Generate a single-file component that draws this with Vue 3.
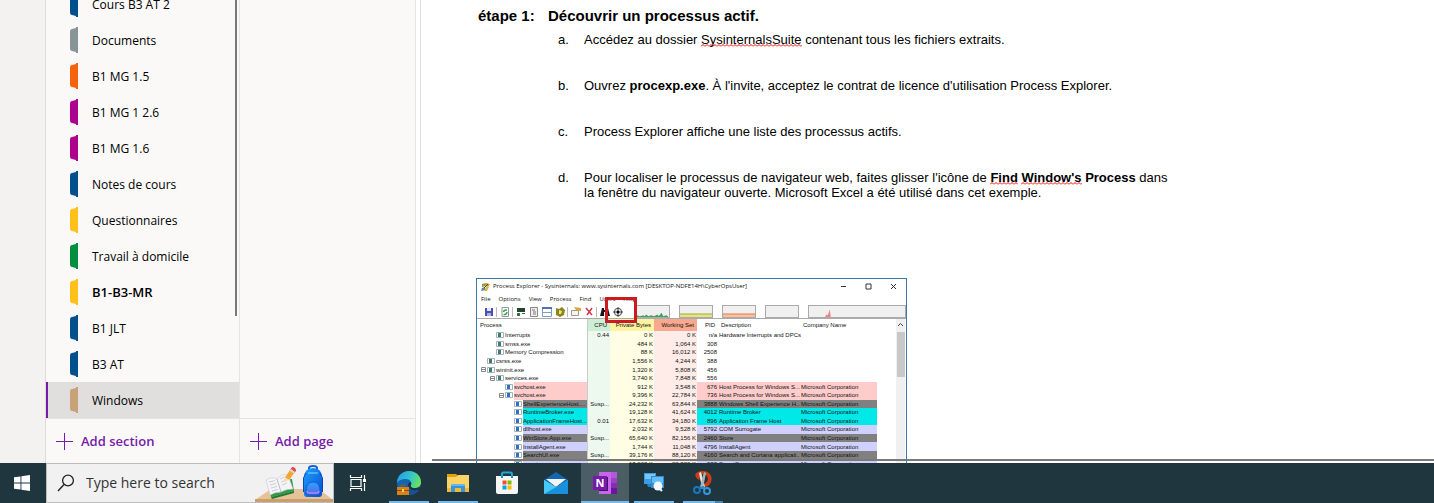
<script setup>
const sections = [
  { name: 'Cours B3 AT 2', tint: 'blue' },
  { name: 'Documents', tint: 'grey' },
  { name: 'B1 MG 1.5', tint: 'orange' },
  { name: 'B1 MG 1 2.6', tint: 'magenta' },
  { name: 'B1 MG 1.6', tint: 'magenta' },
  { name: 'Notes de cours', tint: 'blue' },
  { name: 'Questionnaires', tint: 'yellow' },
  { name: 'Travail à domicile', tint: 'green' },
  { name: 'B1-B3-MR', tint: 'yellow', bold: true },
  { name: 'B1 JLT', tint: 'blue' },
  { name: 'B3 AT', tint: 'blue' },
  { name: 'Windows', tint: 'tan', active: true },
]

const menus = ['File', 'Options', 'View', 'Process', 'Find', 'Users', 'Help']

const ms = 'Microsoft Corporation'
const rows = [
  { n: 'Interrupts', l: 2, cpu: '0.44', pb: '0 K', ws: '0 K', pid: 'n/a', d: 'Hardware Interrupts and DPCs' },
  { n: 'smss.exe', l: 2, pb: '484 K', ws: '1,064 K', pid: '308' },
  { n: 'Memory Compression', l: 2, pb: '88 K', ws: '16,012 K', pid: '2508' },
  { n: 'csrss.exe', l: 1, pb: '1,556 K', ws: '4,244 K', pid: '388' },
  { n: 'wininit.exe', l: 1, open: true, pb: '1,320 K', ws: '5,808 K', pid: '456' },
  { n: 'services.exe', l: 2, open: true, pb: '3,740 K', ws: '7,848 K', pid: '556' },
  { n: 'svchost.exe', l: 3, c: 'pink', pb: '912 K', ws: '3,548 K', pid: '676', d: 'Host Process for Windows S...', co: ms },
  { n: 'svchost.exe', l: 3, open: true, c: 'pink', pb: '9,396 K', ws: '22,784 K', pid: '736', d: 'Host Process for Windows S...', co: ms },
  { n: 'ShellExperienceHost....', l: 4, c: 'dark', cpu: 'Susp...', pb: '24,232 K', ws: '63,844 K', pid: '3888', d: 'Windows Shell Experience H...', co: ms },
  { n: 'RuntimeBroker.exe', l: 4, c: 'cyan', pb: '19,128 K', ws: '41,624 K', pid: '4012', d: 'Runtime Broker', co: ms },
  { n: 'ApplicationFrameHost...', l: 4, c: 'cyan', cpu: '0.01', pb: '17,632 K', ws: '34,180 K', pid: '896', d: 'Application Frame Host', co: ms },
  { n: 'dllhost.exe', l: 4, c: 'lilac', pb: '2,032 K', ws: '9,528 K', pid: '5792', d: 'COM Surrogate', co: ms },
  { n: 'WinStore.App.exe', l: 4, c: 'dark', cpu: 'Susp...', pb: '65,640 K', ws: '82,156 K', pid: '2460', d: 'Store', co: ms },
  { n: 'InstallAgent.exe', l: 4, c: 'lilac', pb: '1,744 K', ws: '11,048 K', pid: '4796', d: 'InstallAgent', co: ms },
  { n: 'SearchUI.exe', l: 4, c: 'dark', cpu: 'Susp...', pb: '39,176 K', ws: '88,120 K', pid: '4160', d: 'Search and Cortana applicati...', co: ms },
  { n: 'smartscreen.exe', l: 4, c: 'lilac', pb: '13,208 K', ws: '22,820 K', pid: '988', d: 'SmartScreen', co: ms },
]
</script>

<template>
  <div class="screen">
    <div class="workspace">
      <div class="rail"></div>

      <nav class="sections" aria-label="Sections">
        <ul class="section-list">
          <li v-for="s in sections" :key="s.name">
            <button class="section" :class="{ active: s.active, bold: s.bold }">
              <svg class="tab" :class="s.tint" width="8" height="26" viewBox="0 0 8 26" aria-hidden="true">
                <path d="M8 0H6V1L2 2Q0 2 0 5V21Q0 24 2 24L6 25V26H8Z" />
              </svg>
              <span>{{ s.name }}</span>
            </button>
          </li>
        </ul>
        <div class="scroll-thumb"></div>
        <button class="add">
          <svg width="17" height="17" viewBox="0 0 17 17" aria-hidden="true"><path d="M0 8.5H17M8.5 0V17" /></svg>
          Add section
        </button>
      </nav>

      <div class="pages">
        <div class="page-list"></div>
        <button class="add">
          <svg width="17" height="17" viewBox="0 0 17 17" aria-hidden="true"><path d="M0 8.5H17M8.5 0V17" /></svg>
          Add page
        </button>
      </div>

      <main class="note">
        <h2><span class="step">étape 1:</span>Découvrir un processus actif.</h2>
        <ol class="steps">
          <li>Accédez au dossier <span class="typo">SysinternalsSuite</span> contenant tous les fichiers extraits.</li>
          <li>Ouvrez <b>procexp.exe</b>. À l'invite, acceptez le contrat de licence d'utilisation Process Explorer.</li>
          <li>Process Explorer affiche une liste des processus actifs.</li>
          <li>Pour localiser le processus de navigateur web, faites glisser l'icône de <b><span class="typo">Find</span> <span class="typo">Window's</span> Process</b> dans<br>la fenêtre du navigateur ouverte. Microsoft Excel a été utilisé dans cet exemple.</li>
        </ol>

        <section class="procexp" aria-label="Process Explorer">
          <header class="titlebar">
            <svg width="10" height="10" viewBox="0 0 10 10" aria-hidden="true">
              <path d="M1 2L5 1 4.500 4 1 5Z" fill="#8a9a4a" /><path d="M5 1L9 2 7 5 4 4Z" fill="#c9a227" />
              <path d="M1 6L4 5 4 8 0 9Z" fill="#5f7fa8" /><path d="M5 5L8 5 6 9 3 9Z" fill="#d9b73c" />
              <path d="M3 6L7 2" stroke="#444" />
            </svg>
            <span class="title">Process Explorer - Sysinternals: www.sysinternals.com [DESKTOP-NDFE14H\CyberOpsUser]</span>
            <button aria-label="Minimize"><svg width="7" height="7" viewBox="0 0 7 7"><path d="M1 3.500H6" /></svg></button>
            <button aria-label="Maximize"><svg width="7" height="7" viewBox="0 0 7 7"><path d="M1 1H6V6H1Z" /></svg></button>
            <button aria-label="Close"><svg width="7" height="7" viewBox="0 0 7 7"><path d="M1 1L6 6M6 1L1 6" /></svg></button>
          </header>
          <div class="menubar">
            <button v-for="m in menus" :key="m">{{ m }}</button>
          </div>
          <div class="toolbar">
            <button aria-label="Save"><svg viewBox="0 0 12 12"><path d="M2 2H10V10H2Z" fill="#4a4fb0" /><path d="M4 2H8V5H4Z" fill="#e6e9fb" /><path d="M4 7H8V10H4Z" fill="#a9aee0" /></svg></button>
            <i></i>
            <button aria-label="Refresh"><svg viewBox="0 0 12 12"><path d="M3 1.500H9.500V10.500H3Z" fill="#fff" stroke="#8a9aa8" /><path d="M4.500 6Q5 3.500 8 4M8 6Q7.500 9 4.500 8.500" fill="none" stroke="#3b9a48" stroke-width="1.500" /></svg></button>
            <i></i>
            <button aria-label="System information"><svg viewBox="0 0 12 12"><path d="M2 2H10V6H2Z" fill="#24452b" /><path d="M2 7H5V10H2ZM7 7H10V8H7Z" fill="#3e6a48" /></svg></button>
            <button aria-label="Process tree"><svg viewBox="0 0 12 12"><path d="M2.500 1.500H9.500V10.500H2.500Z" fill="#eee" stroke="#888" /><path d="M4 4H7M5 6H8M5 8H8" stroke="#777" /></svg></button>
            <button aria-label="Lower pane"><svg viewBox="0 0 12 12"><path d="M1.500 1.500H10.500V10.500H1.500Z" fill="#fff" stroke="#7f9cc8" /><path d="M1 2H11" stroke="#4a72b5" stroke-width="2" /><path d="M1 6.500H11" stroke="#7f9cc8" /></svg></button>
            <button aria-label="Handles"><svg viewBox="0 0 12 12"><path d="M2 2L5 3 8 1 11 4 10 9 6 11 2 9Z" fill="#8b8520" /><path d="M5 4L8 5 7 8 5 8Z" fill="#ece66a" /></svg></button>
            <i></i>
            <button aria-label="Properties"><svg viewBox="0 0 12 12"><path d="M1.500 4.500H8.500V9.500H1.500Z" fill="#f8f4e6" stroke="#999" /><path d="M4 1L11 2V5L6 4Z" fill="#d9a63a" /></svg></button>
            <button aria-label="Kill process"><svg viewBox="0 0 12 12"><path d="M3 2L9 9M9 2L4 9" stroke="#d2364f" stroke-width="1.500" /></svg></button>
            <i></i>
            <button aria-label="Find"><svg viewBox="0 0 12 12"><path d="M3 2H5V4H7V2H9L11 10H7V6H5V10H1Z" fill="#161616" /></svg></button>
            <button aria-label="Find window's process"><svg viewBox="0 0 12 12"><circle cx="6" cy="6" r="3.700" fill="#fff" stroke="#444" /><path d="M6 1V11M1 6H11" stroke="#444" /><circle cx="6" cy="6" r="1.500" /></svg></button>
            <div class="graphs">
              <svg class="graph" viewBox="0 0 34 13" preserveAspectRatio="none"><path d="M0 13V11L3 12 7 11 8 12 10 10 12 12 15 11 18 12 22 10 23 12 26 8 28 12 31 11 33 12V13Z" fill="#3da35d" /></svg>
              <svg class="graph" viewBox="0 0 34 13" preserveAspectRatio="none"><path d="M0 9H34V13H0Z" fill="#e3e38c" /><path d="M0 9.500H34" stroke="#a8a820" /></svg>
              <svg class="graph" viewBox="0 0 34 13" preserveAspectRatio="none"><path d="M0 9H34V13H0Z" fill="#ffc0a0" /><path d="M0 9.500H34" stroke="#e8743c" /></svg>
              <svg class="graph" viewBox="0 0 34 13"></svg>
              <svg class="graph wide" viewBox="0 0 97 13" preserveAspectRatio="none"><path d="M16 13L18 10 19 11 21 4 22 13Z" fill="#f47f86" /></svg>
            </div>
          </div>
          <div class="highlight"></div>
          <div class="list">
            <table>
              <thead>
                <tr>
                  <th>Process</th><th class="cpu">CPU</th><th class="pb">Private Bytes</th><th class="ws">Working Set</th>
                  <th class="num">PID</th><th>Description</th><th>Company Name</th>
                </tr>
              </thead>
              <tbody>
                <tr v-for="(r, i) in rows" :key="i" :class="r.c">
                  <td class="proc" :class="'level' + r.l">
                    <svg class="twist" width="5" height="5" viewBox="0 0 5 5" aria-hidden="true"><path v-if="r.open" d="M.5.5H4.500V4.500H.5ZM1 2.500H4" /></svg>
                    <svg class="app" width="8" height="6" viewBox="0 0 8 6" aria-hidden="true"><path d="M.5.5H7.500V5.500H.5Z" fill="#fff" stroke="#a3b1bd" /><path d="M2 1H5V5H2Z" :fill="r.l > 2 ? '#2f6fc4' : '#3f7d72'" /></svg>
                    <span>{{ r.n }}</span>
                  </td>
                  <td class="cpu">{{ r.cpu }}</td>
                  <td class="pb">{{ r.pb }}</td>
                  <td class="ws">{{ r.ws }}</td>
                  <td class="num fill">{{ r.pid }}</td>
                  <td class="fill">{{ r.d }}</td>
                  <td class="fill">{{ r.co }}</td>
                </tr>
              </tbody>
            </table>
            <div class="vscroll">
              <svg width="7" height="5" viewBox="0 0 7 5" aria-hidden="true"><path d="M1 4L3.500 1.500 6 4" fill="none" stroke="#444" /></svg>
              <div></div>
            </div>
          </div>
        </section>
        <div class="hscroll"></div>
      </main>
    </div>

    <footer class="taskbar">
      <button class="start" aria-label="Start">
        <svg width="16" height="16" viewBox="0 0 16 16"><path d="M0 2.300L6.500 1.400V7.500H0ZM7.400 1.200L16 0V7.500H7.400ZM0 8.400H6.500V14.600L0 13.700ZM7.400 8.400H16V16L7.400 14.800Z" fill="#fff" /></svg>
      </button>
      <label class="search">
        <svg width="18" height="18" viewBox="0 0 18 18" aria-hidden="true"><circle cx="11" cy="6.500" r="5.400" fill="none" stroke="#222" stroke-width="1.300" /><path d="M7 10.500L1 17" stroke="#222" stroke-width="1.400" /></svg>
        <input type="text" placeholder="Type here to search" aria-label="Type here to search">
        <svg class="desk" width="78" height="38" viewBox="0 0 78 38" aria-hidden="true">
          <defs>
            <linearGradient id="bag" x1="0" y1="0" x2="1" y2="1"><stop offset="0" stop-color="#1ba0ff" /><stop offset="1" stop-color="#0b4fd0" /></linearGradient>
            <linearGradient id="pocket" x1="0" y1="0" x2="0" y2="1"><stop offset="0" stop-color="#2aa5ff" /><stop offset="1" stop-color="#5b63e8" /></linearGradient>
          </defs>
          <path d="M16 25H64L78 36H0Z" fill="#e6c298" /><path d="M0 35H78V38H0Z" fill="#c9a06c" />
          <path d="M12 18L16 33 39 27 37 15Z" fill="#2f9a47" /><path d="M16 33L39 27V29L17 35Z" fill="#1f7a35" />
          <path d="M11 16Q17 12 22 15 27 9 33 11L38 25Q31 25 26 28 20 28 15 31Z" fill="#f4f4f6" stroke="#c9c9d2" stroke-width=".6" />
          <path d="M22 15L26 28" stroke="#bbb" /><path d="M14 18L20 16.500M15 21L21 19.500M16 24L22 22.500M17 27L23 25.500M25 15L31 12.500M26 18L32 16M27 21L32 19" stroke="#c2c3d2" stroke-width=".8" />
          <path d="M29 17L31 12 35 6 39 9 35 15Z" fill="#f8a52a" /><path d="M29 18L30 13 34 16Z" fill="#f7dfbd" /><path d="M35 6L37 3Q41 3 41 7L38.500 9.500Z" fill="#e9483e" /><path d="M34.500 6.500L36 5 40 8 38.500 9.500Z" fill="#d8d8e2" />
          <path d="M54 6V4Q54 2 58 2T62 4V6" fill="none" stroke="#1263d6" stroke-width="2" />
          <path d="M49 14Q49 4 58 4T67 14V30Q67 33 64 33H52Q49 33 49 30Z" fill="url(#bag)" />
          <path d="M51 9L48.500 14V28M65 9L67.500 14V28" fill="none" stroke="#0d47b5" />
          <path d="M53 9H63" stroke="#8cd5ff" /><path d="M51 27Q51 18 58 18T65 27V29Q65 31 63 31H53Q51 31 51 29Z" fill="url(#pocket)" stroke="#104bc0" stroke-width=".7" />
          <path d="M52 27Q52 29 54 29H62Q64 29 64 27" fill="none" stroke="#c99cff" />
        </svg>
      </label>
      <button class="task view" aria-label="Task View">
        <svg width="18" height="18" viewBox="0 0 18 18"><path d="M1.500 1V3.500H12.500V1M1.500 17V14.500H12.500V17M2 5.500H12V12.500H2ZM15.500 1V5M15.500 9V17" fill="none" stroke="#fff" stroke-width="1.200" /><path d="M14 5H17V8H14Z" fill="#fff" /></svg>
      </button>
      <button class="task open" aria-label="Microsoft Edge">
        <svg width="26" height="26" viewBox="0 0 26 26">
          <defs><linearGradient id="edge" x1="0" y1=".3" x2="1" y2=".6"><stop offset="0" stop-color="#259de5" /><stop offset=".5" stop-color="#31c4cf" /><stop offset="1" stop-color="#6be553" /></linearGradient></defs>
          <circle cx="13" cy="13" r="12" fill="#1267b5" />
          <path d="M1 13C1 6 6 1 13 1S25 6 25 12C25 16 22 18 19 18 16 18 14 17 15 15 16 12 14 9 10 9 5 9 2 11 1 13Z" fill="url(#edge)" />
          <path d="M15 12C16 14 14 15 15 17 17 19 21 18 24 17L25 18 23 20C18 22 12 19 12 15Q12 12 15 12Z" fill="#20363f" />
          <path d="M11 12C9 17 13 22 23 20 21 23 18 25 14 25L9 20Z" fill="#184f97" />
          <path d="M1 17H13V25H1Z" fill="#d78316" /><path d="M1 20H13V21H1Z" fill="#8d4c06" /><path d="M5 17V15H9V17" fill="none" stroke="#9d5a0c" /><path d="M6 19H8V22H6Z" fill="#ffd34d" />
        </svg>
      </button>
      <button class="task open" aria-label="File Explorer">
        <svg width="24" height="22" viewBox="0 0 24 22"><path d="M1 2H10L12 4V7H1Z" fill="#e3a30c" /><path d="M1 5H10L12 3H23V20H1Z" fill="#fbd465" /><path d="M1 16H23V20H1Z" fill="#f3b73a" /><path d="M5 20V12H19V20H15V16H9V20Z" fill="#3a94dc" /><path d="M5 12H19V14H5Z" fill="#69b7ef" /></svg>
      </button>
      <button class="task" aria-label="Microsoft Store">
        <svg width="24" height="24" viewBox="0 0 24 24"><path d="M7 7V3Q7 1.500 8.500 1.500H15.500Q17 1.500 17 3V7" fill="none" stroke="#20a7d8" stroke-width="2" /><path d="M1 5H23V21Q23 23 21 23H3Q1 23 1 21Z" fill="#f5f5f5" /><path d="M7 5V7M17 5V7" stroke="#168fc0" stroke-width="2" /><path d="M7.500 9.500H11.500V13.500H7.500Z" fill="#f25022" /><path d="M12.500 9.500H16.500V13.500H12.500Z" fill="#7fba00" /><path d="M7.500 14.500H11.500V18.500H7.500Z" fill="#00a4ef" /><path d="M12.500 14.500H16.500V18.500H12.500Z" fill="#ffb900" /></svg>
      </button>
      <button class="task" aria-label="Mail">
        <svg width="24" height="24" viewBox="0 0 24 24"><path d="M0 9L12 1 24 9V13H0Z" fill="#1267b4" /><path d="M2 8H22L12 16Z" fill="#f4f4f4" /><path d="M0 9L12 16 24 9V23H0Z" fill="#2fb3ee" /><path d="M0 23L24 9V23Z" fill="#1990dc" /><path d="M0 9L12 16 0 23Z" fill="#47c8f6" /></svg>
      </button>
      <button class="task open current" aria-label="OneNote">
        <svg width="24" height="24" viewBox="0 0 24 24"><path d="M6 1H24V23H6Z" fill="#ca64ea" /><path d="M18 1H24V7H18Z" fill="#b159d8" /><path d="M18 7H24V12H18Z" fill="#9a42c6" /><path d="M18 12H24V17H18Z" fill="#832db0" /><path d="M18 17H24V23H18Z" fill="#681899" /><path d="M6 6H15V20H6Z" fill="#3e1467" /><path d="M0 5H14V19H0Z" fill="#7719aa" /><text x="7" y="16" text-anchor="middle" fill="#fff" font-family="Open Sans, sans-serif" font-size="11" font-weight="700">N</text></svg>
      </button>
      <button class="task open" aria-label="Remote session">
        <svg width="24" height="24" viewBox="0 0 24 24"><path d="M2 2H14V13H2Z" fill="#3b9ee2" /><path d="M3 3H13V8H3Z" fill="#78c6f6" /><path d="M9 5H22V17H9Z" fill="#2b8bd6" /><path d="M10 6H21V12H10Z" fill="#65bdf3" /><path d="M5 13H9V16H6Z" fill="#287fc0" /><circle cx="16" cy="15" r="4.500" fill="#f2f8fc" /><path d="M18 18L20 20" stroke="#f2f8fc" stroke-width="2" /></svg>
      </button>
      <button class="task open stacked" aria-label="Snipping Tool">
        <svg width="24" height="26" viewBox="0 0 24 26"><path d="M8 10C0 4 7 1 12 1 19 1 22 7 20 12 19 15 16 17 13 17L12 14C17 13 18 9 16 6 14 3 8 4 9 8Z" fill="#cf3c16" /><path d="M8 3L10 2 14 17 11 18Z" fill="#e3e7ea" /><path d="M15 3L13 2 9 17 12 18Z" fill="#a9b2b8" /><path d="M11 16L13 16 15 19H8Z" fill="#2f8ccd" /><circle cx="6" cy="20" r="3" fill="none" stroke="#1976c2" stroke-width="2" /><circle cx="16" cy="21" r="3" fill="none" stroke="#3398dc" stroke-width="2" /></svg>
      </button>
    </footer>
  </div>
</template>

<style>
html, body { margin: 0; background: #fff; }
</style>

<style scoped>
* { box-sizing: border-box; }
button { border: 0; padding: 0; background: none; font: inherit; color: inherit; }
svg { display: block; flex: none; }
.screen { display: flex; flex-direction: column; height: 100vh; overflow: hidden; font-family: "Open Sans", "Noto Sans", sans-serif; color: #1b1a19; }
.workspace { display: flex; flex: 1; min-height: 0; background: #fff; }

.rail { width: 46px; flex: none; background: #f3f2f1; border-right: 1px solid #dddbd9; }
.sections { position: relative; display: flex; flex-direction: column; width: 194px; flex: none; background: #faf9f8; border-right: 1px solid #e6e4e2; }
.section-list { display: flex; flex-direction: column; justify-content: flex-end; flex: 1; min-height: 0; overflow: hidden; margin: 0; padding: 0; list-style: none; }
.section-list li { flex: none; }
.section { display: flex; align-items: center; gap: 14px; width: 100%; height: 36px; padding-left: 24px; font-size: 12px; text-align: left; color: #000; }
.section.active { background: #e1dfdd; border-left: 2px solid #7719aa; padding-left: 22px; }
.section.bold { font-size: 13px; font-weight: 600; }
.tab { fill: #00508c; }
.tab.grey { fill: #879498; }
.tab.orange { fill: #f7630c; }
.tab.magenta { fill: #ad008c; }
.tab.yellow { fill: #ffc119; }
.tab.green { fill: #008f3c; }
.tab.tan { fill: #c8a276; }
.scroll-thumb { position: absolute; top: 0; right: 2px; width: 2px; height: 316px; background: #7b7977; }
.add { display: flex; align-items: center; gap: 8px; flex: none; width: 100%; height: 45px; padding-left: 10px; border-top: 1px solid #e6e4e2; font-size: 13px; font-weight: 600; color: #7719aa; }
.add svg { stroke: #7719aa; }
.pages { display: flex; flex-direction: column; width: 176px; flex: none; background: #faf9f8; border-right: 1px solid #e6e4e2; }
.page-list { flex: 1; }

.note { position: relative; flex: 1; min-width: 0; margin-left: 4px; padding: 7px 0 0 55px; border-left: 1px solid #e1dfdd; overflow: hidden; font-family: "Liberation Sans", Arial, sans-serif; color: #000; }
h2 { display: flex; margin: 0; padding-left: 2px; font-size: 15px; line-height: 18px; font-weight: 700; }
.step { width: 70px; }
.steps { display: flex; flex-direction: column; gap: 31px; margin: 7px 0 0; padding-left: 82px; list-style: none; font-size: 13px; line-height: 15px; counter-reset: step; }
.steps li { display: block; counter-increment: step; padding-left: 26px; text-indent: -26px; white-space: nowrap; }
.steps li::before { content: counter(step, lower-alpha) "."; display: inline-block; width: 26px; text-indent: 0; }
.typo { background: url("data:image/svg+xml,%3Csvg xmlns='http://www.w3.org/2000/svg' width='4' height='3'%3E%3Cpath d='M0 2.500L2 .5 4 2.500' fill='none' stroke='%23f00'/%3E%3C/svg%3E") left bottom repeat-x; }

.procexp { position: relative; width: 431px; margin-top: 78px; border: 1px solid #3579ad; background: #fff; font-family: "Open Sans", sans-serif; font-size: 6px; line-height: 9px; color: #111; }
.titlebar { display: flex; align-items: center; height: 15px; padding-left: 4px; }
.title { flex: 1; padding-left: 2px; white-space: nowrap; }
.titlebar button { display: flex; justify-content: center; width: 25px; }
.titlebar button svg { fill: none; stroke: #333; }
.menubar { display: flex; gap: 8px; height: 11px; padding-left: 4px; }
.toolbar { display: flex; align-items: center; height: 14px; padding-left: 6px; border-bottom: 1px solid #aaa; }
.toolbar button { width: 13px; }
.toolbar button svg { width: 12px; height: 12px; }
.toolbar i { width: 3px; height: 10px; border-left: 1px solid #bbb; }
.graphs { display: flex; flex: 1; height: 13px; margin-left: 11px; gap: 9px; }
.graph { width: 34px; height: 13px; border: 1px solid #aaa; background: #f0f0f0; }
.graph.wide { flex: 1; min-width: 0; }
.highlight { position: absolute; left: 128px; top: 18px; width: 32px; height: 26px; border: 3px solid #cc1a22; }
.list { display: flex; height: 149px; }
table { display: block; flex: 1; font-family: "Liberation Sans", Arial, sans-serif; font-size: 6px; line-height: 8px; }
thead, tbody { display: grid; }
tr { display: grid; grid-template-columns: 110px 23px 44px 43px 21px 82px 77px 1fr; }
thead { height: 12px; }
tbody { height: 137px; grid-template-rows: repeat(16, 1fr); }
th, td { display: flex; align-items: center; padding: 0 1px; min-width: 0; font-weight: 400; white-space: nowrap; }
th { padding: 0 3px; }
.cpu, .pb, .ws, .num { justify-content: flex-end; }
.cpu { background: #edf8ef; border-left: 1px solid #ccc; }
.pb { background: #fffde3; }
.ws { background: #ffebe7; }
th.cpu { background: #cbeed5; }
th.pb { background: #fcf4a0; }
th.ws { background: #f8a88e; }
.proc { padding: 0; gap: 1px; }
.proc span { display: flex; align-items: center; align-self: stretch; flex: 1; min-width: 0; }
.level1 { padding-left: 4px; }
.level2 { padding-left: 13px; }
.level3 { padding-left: 22px; }
.level4 { padding-left: 31px; }
.twist { fill: none; stroke: #888; }
.pink .proc span, .pink .fill { background: #ffcccc; }
.dark .proc span, .dark .fill { background: #808080; }
.cyan .proc span, .cyan .fill { background: #00e8e8; }
.lilac .proc span, .lilac .fill { background: #d0d0ff; }
.vscroll { display: flex; flex-direction: column; align-items: center; width: 9px; margin-right: 1px; padding-top: 3px; gap: 5px; background: #f0f0f0; }
.vscroll div { width: 8px; height: 45px; background: #c8c8c8; }
.hscroll { position: absolute; left: 11px; right: 0; bottom: 2px; height: 2px; background: #7b7977; }

.taskbar { display: flex; flex: none; height: 40px; background: #20363f; }
.start { display: flex; align-items: center; justify-content: center; width: 46px; padding-right: 2px; }
.search { position: relative; display: flex; align-items: center; gap: 11px; width: 288px; padding-left: 10px; border: 1px solid #bdbdbd; background: #f1f1f1; }
.search input { width: 180px; border: 0; padding: 0; outline: 0; background: none; font: 14px/20px "Open Sans", "Noto Sans", sans-serif; }
.search input::placeholder { color: #333; opacity: 1; }
.desk { position: absolute; right: 0; bottom: 0; }
.task { position: relative; display: flex; align-items: center; justify-content: center; width: 48px; margin-right: 1px; }
.task.view { margin-right: 3px; }
.task.open::after { content: ""; position: absolute; left: 4px; right: 4px; bottom: 0; height: 2px; background: #76b9ed; }
.task.current { background: #4c5e65; }
.task.current::after { left: 0; right: 0; }
.task.stacked::after { background: linear-gradient(to right, #76b9ed 80%, #4d84ad 80%); }
</style>
